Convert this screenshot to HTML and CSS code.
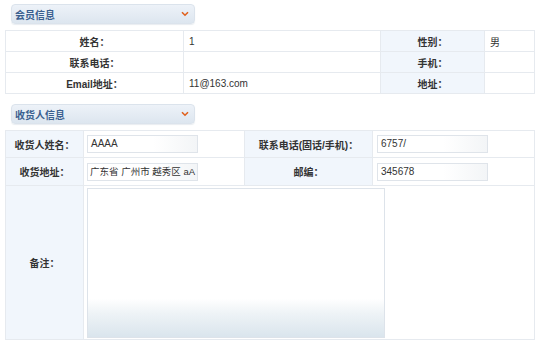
FILE: index.html
```html
<!DOCTYPE html>
<html lang="zh-CN">
<head>
<meta charset="utf-8">
<title>订单信息</title>
<link rel="stylesheet" href="styles.css">
</head>
<body>
<div class="page">
  <div class="section-bar">
    <span class="section-title">会员信息</span>
    <svg class="chevron" width="8" height="6" viewBox="0 0 8 6"><path d="M1 1.2 L4 4.2 L7 1.2" fill="none" stroke="#e0601c" stroke-width="1.6"/></svg>
  </div>
  <table class="form-table member">
    <colgroup><col class="c1"><col class="c2"><col class="c3"><col class="c4"></colgroup>
    <tr><th class="plain">姓名：</th><td>1</td><th>性别：</th><td>男</td></tr>
    <tr><th class="plain">联系电话：</th><td></td><th>手机：</th><td></td></tr>
    <tr><th class="plain">Email地址：</th><td>11@163.com</td><th>地址：</th><td></td></tr>
  </table>

  <div class="section-bar second">
    <span class="section-title">收货人信息</span>
    <svg class="chevron" width="8" height="6" viewBox="0 0 8 6"><path d="M1 1.2 L4 4.2 L7 1.2" fill="none" stroke="#e0601c" stroke-width="1.6"/></svg>
  </div>
  <table class="form-table receiver">
    <colgroup><col class="r1"><col class="r2"><col class="r3"><col class="r4"></colgroup>
    <tr class="row-input">
      <th>收货人姓名：</th><td><div class="field">AAAA</div></td>
      <th>联系电话(固话/手机)：</th><td class="pad-r"><div class="field">6757/</div></td>
    </tr>
    <tr class="row-input tall">
      <th>收货地址：</th><td><div class="field small">广东省 广州市 越秀区 aA</div></td>
      <th>邮编：</th><td class="pad-r"><div class="field">345678</div></td>
    </tr>
    <tr class="row-note">
      <th>备注：</th>
      <td colspan="3"><div class="note"></div></td>
    </tr>
  </table>
</div>
</body>
</html>
```
FILE: styles.css
```css
html, body {
  margin: 0;
  padding: 0;
  background: #ffffff;
}
body {
  font-family: "Liberation Sans", "Noto Sans CJK SC", sans-serif;
  font-size: 10px;
  color: #333333;
}
.page {
  padding: 4px 0 0 5px;
  width: 529px;
}
.section-bar {
  margin-left: 6px;
  width: 174px;
  height: 18px;
  border: 1px solid #dbe3ec;
  border-radius: 4px;
  background: linear-gradient(#edf2f8, #dde6ef);
  display: flex;
  align-items: center;
  justify-content: space-between;
  padding: 0 5px 0 3px;
  box-sizing: content-box;
  box-shadow: 0 1px 1px rgba(200, 210, 220, 0.4);
}
.section-bar.second {
  margin-top: 10px;
}
.section-title {
  color: #3b5f8f;
  font-weight: bold;
  font-size: 10px;
}
.chevron {
  display: block;
}
.form-table {
  width: 529px;
  border-collapse: collapse;
  table-layout: fixed;
  margin-top: 6px;
  border: 1px solid #e3e8ee;
}
.form-table th,
.form-table td {
  border: 1px solid #e6eaef;
  padding: 0;
  font-size: 10px;
  vertical-align: middle;
}
.form-table th {
  background: #f1f6fc;
  font-weight: bold;
  text-align: center;
  color: #333333;
}
.form-table th.plain {
  background: #ffffff;
}
.form-table td {
  padding-left: 5px;
  background: #ffffff;
}
.member tr {
  height: 21px;
}
.member .c1 { width: 178px; }
.member .c2 { width: 197px; }
.member .c3 { width: 104px; }
.member .c4 { width: 50px; }
.receiver .r1 { width: 78px; }
.receiver .r2 { width: 161px; }
.receiver .r3 { width: 128px; }
.receiver .r4 { width: 162px; }
.receiver td {
  padding-left: 3px;
}
.receiver td.pad-r {
  padding-left: 4px;
}
.row-input {
  height: 27px;
}
.row-input.tall {
  height: 28px;
}
.field {
  width: 111px;
  height: 18px;
  line-height: 16px;
  border: 1px solid #dfe4ea;
  background: linear-gradient(to right, #ffffff 60%, #f3f5f7);
  padding-left: 3px;
  box-sizing: border-box;
  white-space: nowrap;
  overflow: hidden;
  color: #333333;
}
.field.small {
  font-size: 9.5px;
  padding-left: 2px;
}
.row-note {
  height: 154px;
}
.note {
  width: 298px;
  height: 150px;
  box-sizing: border-box;
  border: 1px solid #dde3ea;
  background: linear-gradient(#ffffff 0%, #ffffff 74%, #eef3f6 84%, #dae5ed 100%);
}
```
